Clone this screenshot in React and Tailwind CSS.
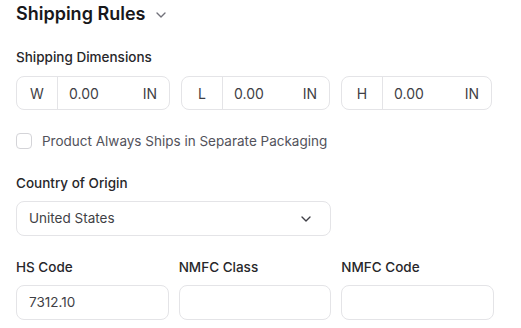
import React from "react";
import { ChevronDown } from "lucide-react";

const dims = [
  { label: "W", value: "0.00" },
  { label: "L", value: "0.00" },
  { label: "H", value: "0.00" },
];

const DimInput = ({ label, value }) => (
  <div className="flex h-[34px] items-center rounded-lg border border-[#e4e4e7] bg-white text-[14px]">
    <div className="flex h-full w-[41px] items-center justify-center border-r border-[#e4e4e7] text-[#3f3f46]">{label}</div>
    <div className="flex flex-1 items-center justify-between pl-[11px] pr-3 text-[#3f3f46]">
      <span>{value}</span>
      <span>IN</span>
    </div>
  </div>
);

const TextField = ({ label, value }) => (
  <div>
    <div className="mb-2 text-[13.5px] font-medium leading-5 text-[#27272a]">{label}</div>
    <div className="flex h-[35px] items-center rounded-lg border border-[#e4e4e7] px-3 text-[13.5px] text-[#3f3f46]">{value}</div>
  </div>
);

export default function App() {
  return (
    <div className="h-[328px] w-[521px] overflow-hidden bg-white px-4 font-['Inter',sans-serif]">
      {/* Header */}
      <div className="flex items-center gap-2 pt-[2px]">
        <h1 className="text-[18px] font-semibold leading-6 text-[#18181b]">Shipping Rules</h1>
        <ChevronDown className="mt-[1px] h-4 w-4 text-[#71717a]" strokeWidth={2} />
      </div>

      <div className="w-[478px]">
        {/* Dimensions */}
        <div className="mt-[21px] text-[13.5px] font-medium leading-5 text-[#27272a]">Shipping Dimensions</div>
        <div className="mt-[9px] grid grid-cols-[154px_149px_151px] gap-[11px]">
          {dims.map((d) => (
            <DimInput key={d.label} label={d.label} value={d.value} />
          ))}
        </div>

        {/* Checkbox */}
        <label className="mt-[21px] flex items-center gap-[10px]">
          <span className="h-4 w-4 rounded-[4px] border border-[#d4d4d8] bg-white" />
          <span className="text-[13.5px] leading-5 text-[#52525b]">Product Always Ships in Separate Packaging</span>
        </label>

        {/* Country */}
        <div className="mt-[22px] grid grid-cols-3 gap-[10px]">
          <div className="col-span-2">
            <div className="mb-2 text-[13.5px] font-medium leading-5 text-[#27272a]">Country of Origin</div>
            <div className="flex h-[35px] items-center justify-between rounded-lg border border-[#e4e4e7] pl-3 pr-4 text-[13.5px] text-[#3f3f46]">
              <span>United States</span>
              <ChevronDown className="h-4 w-4 text-[#3f3f46]" strokeWidth={2} />
            </div>
          </div>
        </div>

        {/* Codes */}
        <div className="mt-[21px] grid grid-cols-3 gap-[10px]">
          <TextField label="HS Code" value="7312.10" />
          <TextField label="NMFC Class" value="" />
          <TextField label="NMFC Code" value="" />
        </div>
      </div>
    </div>
  );
}
